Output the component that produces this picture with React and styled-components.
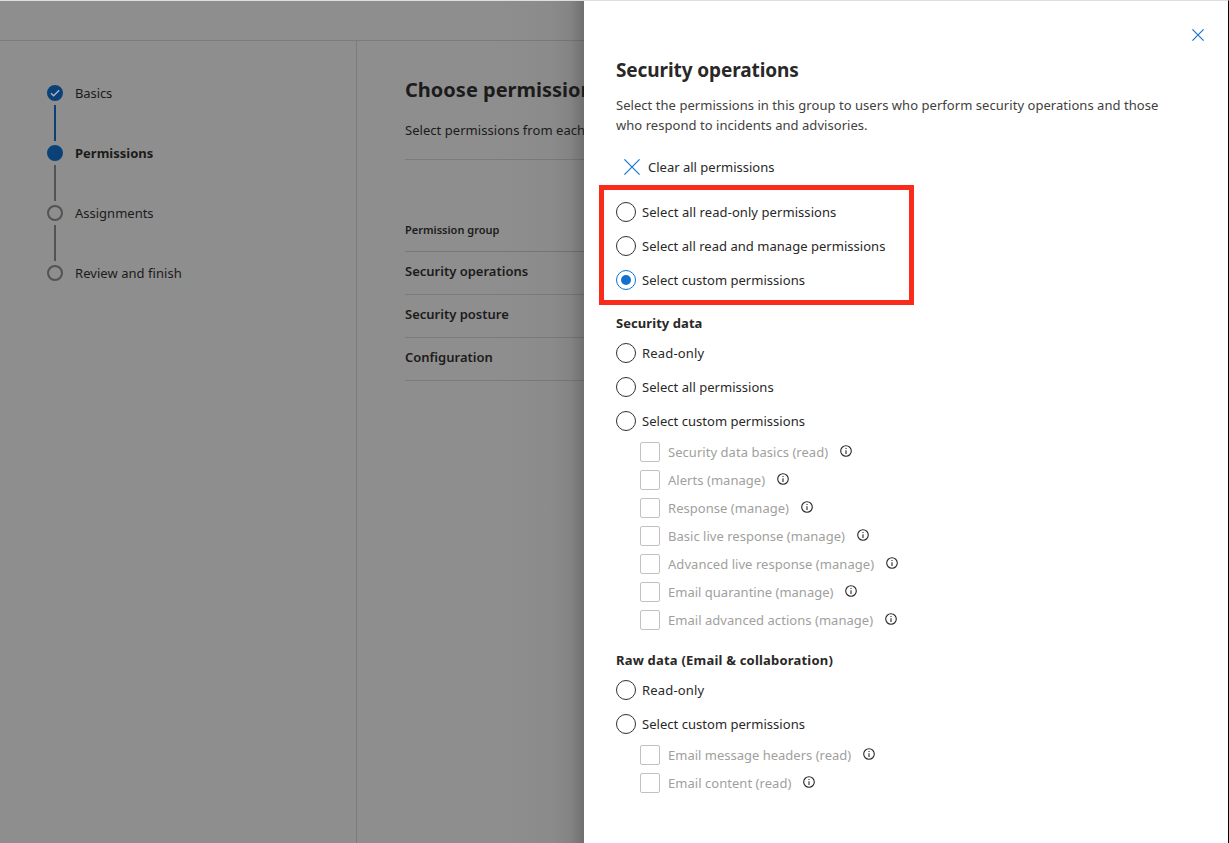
import React from "react";
import styled, { createGlobalStyle } from "styled-components";

const Global = createGlobalStyle`
  * { box-sizing: border-box; }
  body { margin: 0; background: #8e8e8e; overflow: hidden; }
`;

const Screen = styled.div`
  width: 1229px;
  height: 843px;
  display: flex;
  border-top: 1px solid #dcdfdd;
  border-right: 1px solid #000;
  background: #fff;
  font-family: "Noto Sans", "Open Sans", sans-serif;
  font-size: 13px;
  line-height: 20px;
  color: #292827;
  white-space: nowrap;
`;

const Page = styled.div`
  width: 584px;
  flex: none;
  display: flex;
  flex-direction: column;
  overflow: hidden;
  background: linear-gradient(to right, #8e8e8e 500px, #8b8b8b 550px, #848484 570px, #6f6f6f 584px);
  color: #1c1b1b;
`;

const TopBar = styled.header`
  height: 40px;
  border-bottom: 1px solid rgba(0, 0, 0, 0.13);
  flex: none;
`;

const Columns = styled.div`
  flex: 1;
  display: flex;
`;

const StepNav = styled.nav`
  width: 357px;
  flex: none;
  padding: 42px 0 0 47px;
  border-right: 1px solid rgba(0, 0, 0, 0.13);
`;

const Step = styled.div`
  height: 60px;
  display: flex;
  align-items: flex-start;
  gap: 12px;
`;

const Marker = styled.div`
  width: 16px;
  display: flex;
  flex-direction: column;
  align-items: center;
  gap: 4px;
  padding-top: 2px;
`;

const Dot = styled.span`
  width: 16px;
  height: 16px;
  border-radius: 50%;
  display: flex;
  border: 2px solid ${(p) => (p.$active ? "#0b4179" : "#535353")};
  background: ${(p) => (p.$active ? "#0b4179" : "transparent")};
`;

const Connector = styled.span`
  width: 2px;
  height: 36px;
  background: ${(p) => (p.$active ? "#0b4179" : "#535353")};
`;

const Label = styled.span`
  letter-spacing: ${(p) => p.$track || 0}px;
  font-weight: ${(p) => (p.$bold ? 700 : 400)};
`;

const Main = styled.main`
  flex: 1;
  padding: 35px 0 0 48px;
`;

const PageTitle = styled.h1`
  margin: 0;
  font-size: 20px;
  line-height: 28px;
  font-weight: 700;
`;

const Intro = styled.p`
  margin: 16px 0 0;
  padding-bottom: 19px;
  letter-spacing: 0.045px;
  border-bottom: 1px solid rgba(0, 0, 0, 0.13);
`;

const GroupHead = styled.div`
  margin-top: 60px;
  height: 32px;
  font-size: 11px;
  font-weight: 600;
  border-bottom: 1px solid rgba(0, 0, 0, 0.16);
`;

const GroupRow = styled.div`
  height: 43px;
  padding-top: 9px;
  font-weight: 600;
  border-bottom: 1px solid rgba(0, 0, 0, 0.13);
`;

const Panel = styled.aside`
  flex: 1;
  background: #fff;
  padding: 28px 24px 0 32px;
`;

const PanelTop = styled.div`
  height: 27px;
  display: flex;
  justify-content: flex-end;
`;

const PanelTitle = styled.h2`
  margin: 0;
  font-size: 19px;
  line-height: 28px;
  font-weight: 700;
  letter-spacing: -0.1px;
`;

const Description = styled.p`
  margin: 11px 0 0;
  color: #424140;
  letter-spacing: 0.045px;
`;

const ClearButton = styled.div`
  height: 20px;
  margin: 22px 0 8px;
  padding-left: 8px;
  display: flex;
  align-items: center;
  gap: 8px;
`;

const Highlight = styled.div`
  width: 315px;
  height: 120px;
  margin-left: -17px;
  padding: 5px 12px 3px;
  border: 5px solid #fb2b1c;
`;

const RadioRow = styled.div`
  height: 34px;
  display: flex;
  align-items: center;
  gap: 6px;
`;

const Radio = styled.span`
  width: 20px;
  height: 20px;
  border-radius: 50%;
  display: flex;
  align-items: center;
  justify-content: center;
  border: 1px solid ${(p) => (p.$checked ? "#1270cf" : "#323130")};
  &::after {
    content: "";
    width: 10px;
    height: 10px;
    border-radius: 50%;
    background: ${(p) => (p.$checked ? "#1270cf" : "transparent")};
  }
`;

const SectionTitle = styled.h3`
  margin: ${(p) => p.$gap}px 0 3px;
  font-size: 13px;
  line-height: 20px;
  font-weight: 700;
  letter-spacing: ${(p) => p.$track}px;
`;

const CheckRow = styled.div`
  height: 28px;
  padding-left: 24px;
  display: flex;
  align-items: center;
  color: #a19f9d;
`;

const Box = styled.span`
  width: 20px;
  height: 20px;
  margin-right: 8px;
  border: 1px solid #c3c1bf;
  border-radius: 2px;
`;

const InfoSvg = styled.svg`
  margin: 0 0 3px 12px;
`;

const Cross = ({ size }) => (
  <svg width={size} height={size} viewBox={`0 0 ${size} ${size}`} fill="none" stroke="#1874d2" strokeWidth="1.2">
    <path d={`M.4 .4L${size - 0.4} ${size - 0.4}M${size - 0.4} .4L.4 ${size - 0.4}`} />
  </svg>
);

const Info = () => (
  <InfoSvg width="12" height="12" viewBox="0 0 12 12" fill="none" stroke="#292827">
    <circle cx="6" cy="6" r="5.3" strokeWidth="1.1" />
    <path d="M6 5.2V9M6 3v1.1" strokeWidth="1.1" />
  </InfoSvg>
);

const Option = ({ text, track = 0.03, checked }) => (
  <RadioRow>
    <Radio $checked={checked} />
    <Label $track={track}>{text}</Label>
  </RadioRow>
);

const Check = ({ text, track }) => (
  <CheckRow>
    <Box />
    <Label $track={track}>{text}</Label>
    <Info />
  </CheckRow>
);

const steps = [
  { text: "Basics", active: true, done: true, track: -0.1 },
  { text: "Permissions", active: true, bold: true, track: 0 },
  { text: "Assignments", track: 0 },
  { text: "Review and finish", track: 0.05 },
];

const securityChecks = [
  ["Security data basics (read)", 0.04],
  ["Alerts (manage)", 0.04],
  ["Response (manage)", 0.04],
  ["Basic live response (manage)", 0.02],
  ["Advanced live response (manage)", 0.05],
  ["Email quarantine (manage)", 0.01],
  ["Email advanced actions (manage)", 0.04],
];

const rawChecks = [
  ["Email message headers (read)", 0],
  ["Email content (read)", 0.04],
];

export default function App() {
  return (
    <>
      <Global />
      <Screen>
        <Page>
          <TopBar />
          <Columns>
            <StepNav>
              {steps.map((s, i) => (
                <Step key={s.text}>
                  <Marker>
                    <Dot $active={s.active}>
                      {s.done && (
                        <svg width="12" height="12" viewBox="0 0 12 12" fill="none" stroke="#a9b3bd" strokeWidth="1.4">
                          <path d="M2 6.3L4.6 8.8L10.2 3.2" />
                        </svg>
                      )}
                    </Dot>
                    {i < steps.length - 1 && <Connector $active={s.done} />}
                  </Marker>
                  <Label $bold={s.bold} $track={s.track}>{s.text}</Label>
                </Step>
              ))}
            </StepNav>
            <Main>
              <PageTitle>Choose permissions</PageTitle>
              <Intro>Select permissions from each group</Intro>
              <GroupHead>Permission group</GroupHead>
              <GroupRow>Security operations</GroupRow>
              <GroupRow>Security posture</GroupRow>
              <GroupRow>Configuration</GroupRow>
            </Main>
          </Columns>
        </Page>
        <Panel>
          <PanelTop><Cross size={12} /></PanelTop>
          <PanelTitle>Security operations</PanelTitle>
          <Description>
            Select the permissions in this group to users who perform security operations and those
            <br />
            who respond to incidents and advisories.
          </Description>
          <ClearButton>
            <Cross size={16} />
            <Label>Clear all permissions</Label>
          </ClearButton>
          <Highlight>
            <Option text="Select all read-only permissions" track={0.07} />
            <Option text="Select all read and manage permissions" />
            <Option text="Select custom permissions" checked />
          </Highlight>
          <SectionTitle $gap={8} $track={0.06}>Security data</SectionTitle>
          <Option text="Read-only" track={0.18} />
          <Option text="Select all permissions" />
          <Option text="Select custom permissions" />
          {securityChecks.map(([text, track]) => <Check key={text} text={text} track={track} />)}
          <SectionTitle $gap={16} $track={0.2}>Raw data (Email &amp; collaboration)</SectionTitle>
          <Option text="Read-only" track={0.18} />
          <Option text="Select custom permissions" />
          {rawChecks.map(([text, track]) => <Check key={text} text={text} track={track} />)}
        </Panel>
      </Screen>
    </>
  );
}
